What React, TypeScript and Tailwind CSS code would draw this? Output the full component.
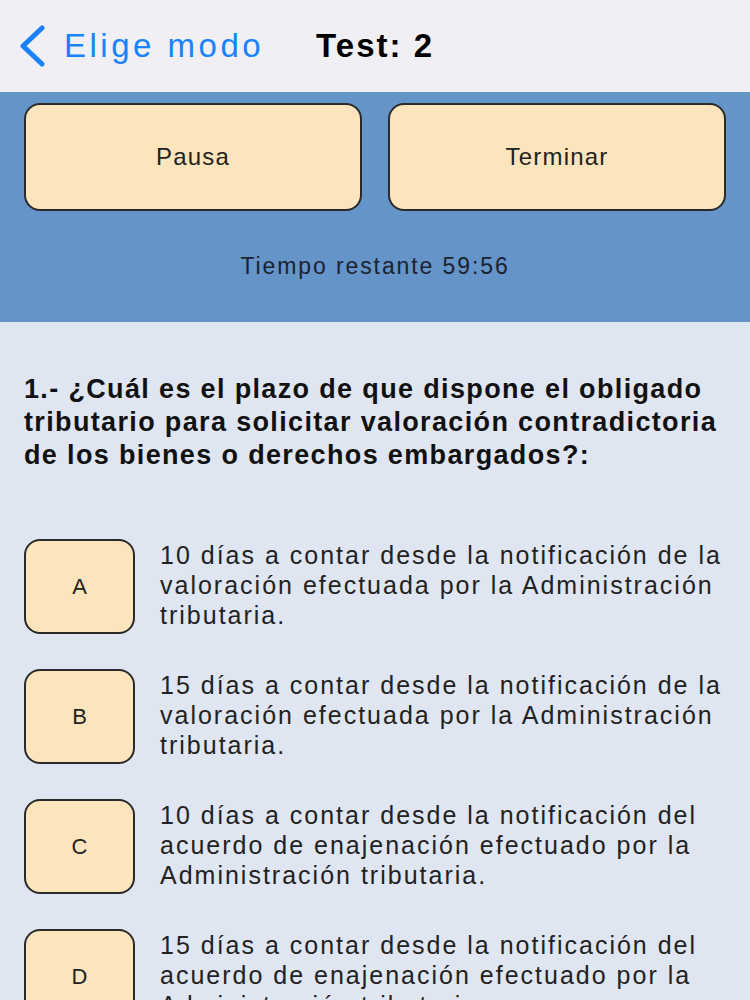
const options = [
  {
    letter: "A",
    text: "10 días a contar desde la notificación de la valoración efectuada por la Administración tributaria.",
  },
  {
    letter: "B",
    text: "15 días a contar desde la notificación de la valoración efectuada por la Administración tributaria.",
  },
  {
    letter: "C",
    text: "10 días a contar desde la notificación del acuerdo de enajenación efectuado por la Administración tributaria.",
  },
  {
    letter: "D",
    text: "15 días a contar desde la notificación del acuerdo de enajenación efectuado por la Administración tributaria.",
  },
];

function ChevronLeft() {
  return (
    <svg width="30" height="42" viewBox="0 0 30 42" fill="none">
      <path
        d="M24 3 L5 21 L24 39"
        stroke="#1a82fb"
        strokeWidth="5"
        strokeLinecap="round"
        strokeLinejoin="round"
      />
    </svg>
  );
}

export default function App() {
  return (
    <div
      className="w-[750px] h-[1000px] overflow-hidden bg-[#dfe6f2] text-[#1c1c1c]"
      style={{ fontFamily: '"Liberation Sans", Arial, sans-serif' }}
    >
      <div className="h-[92px] bg-[#efeff4] flex items-center pl-[18px]">
        <ChevronLeft />
        <span className="ml-[16px] text-[33px] tracking-[3.5px] text-[#1a82fb]">Elige modo</span>
        <span className="ml-[52px] text-[33px] tracking-[2px] font-bold text-black">Test: 2</span>
      </div>

      <div className="h-[230px] bg-[#6494c8] px-[24px] pt-[11px]">
        <div className="flex gap-[26px]">
          <button className="h-[108px] flex-1 rounded-[16px] border-2 border-[#2a2a2a] bg-[#fce5bc] text-[24px] tracking-[1.2px] text-[#222]">
            Pausa
          </button>
          <button className="h-[108px] flex-1 rounded-[16px] border-2 border-[#2a2a2a] bg-[#fce5bc] text-[24px] tracking-[1.2px] text-[#222]">
            Terminar
          </button>
        </div>
        <div className="mt-[38px] text-center text-[23px] tracking-[1.9px] text-[#1c2230]">
          Tiempo restante 59:56
        </div>
      </div>

      <div className="px-[24px] pt-[51px]">
        <p className="text-[27px] font-bold leading-[33px] tracking-[1.35px] text-[#111]">
          1.- ¿Cuál es el plazo de que dispone el obligado tributario para solicitar valoración
          contradictoria de los bienes o derechos embargados?:
        </p>

        <div className="mt-[67px] flex flex-col gap-[35px]">
          {options.map((o) => (
            <div key={o.letter} className="flex items-start">
              <div className="w-[111px] h-[95px] shrink-0 rounded-[16px] border-2 border-[#2a2a2a] bg-[#fce5bc] flex items-center justify-center text-[22px] text-[#222]">
                {o.letter}
              </div>
              <p className="ml-[25px] mt-[1px] text-[25px] leading-[30px] tracking-[2px] text-[#222]">
                {o.text}
              </p>
            </div>
          ))}
        </div>
      </div>
    </div>
  );
}
